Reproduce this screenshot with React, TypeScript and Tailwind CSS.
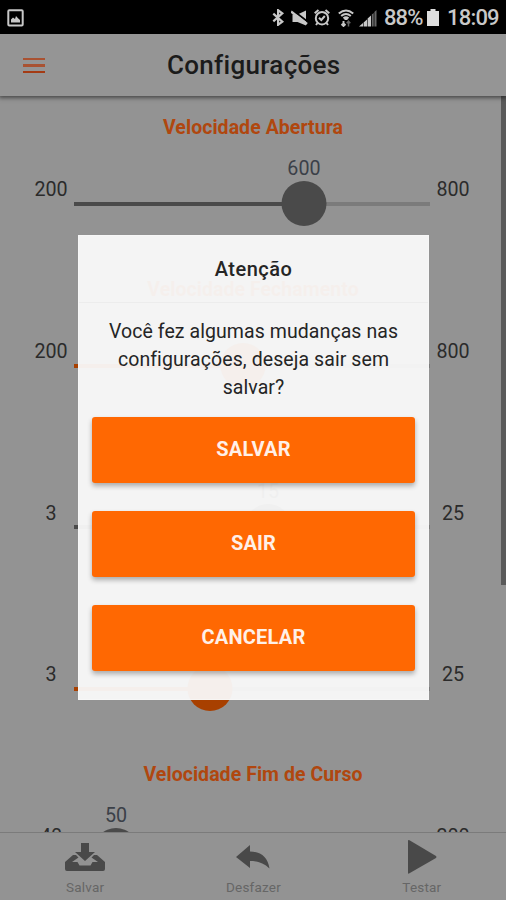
import clsx from 'clsx';

interface RangeSetting {
  id: string;
  title?: string;
  min: string;
  max: string;
  pin?: string;
  percent: number;
  active?: boolean;
}

const settings: RangeSetting[] = [
  { id: 'open', title: 'Velocidade Abertura', min: '200', max: '800', pin: '600', percent: 64.6 },
  { id: 'close', title: 'Velocidade Fechamento', min: '200', max: '800', percent: 47.4, active: true },
  { id: 'ramp-open', min: '3', max: '25', pin: '15', percent: 54.5 },
  { id: 'ramp-close', min: '3', max: '25', percent: 38.2, active: true },
  { id: 'end', title: 'Velocidade Fim de Curso', min: '40', max: '200', pin: '50', percent: 11.8 },
];

function StatusBar() {
  return (
    <div className="flex h-[34px] shrink-0 items-center bg-black px-[7px] pt-px text-[#c8c8c8]">
      <svg className="h-[18px] w-[17px]" viewBox="0 0 17 18">
        <rect x="1.3" y="1.3" width="14.4" height="15.2" rx="1" fill="none" stroke="currentColor" strokeWidth="2" />
        <path d="M4 13.5v-3l2-2 2 1.5 1-3 1.8 2 2.2 2v2.5z" fill="currentColor" />
      </svg>
      <div className="ml-auto flex items-center">
        <svg className="h-[17px] w-[13px]" viewBox="0 0 13 17" fill="none" stroke="currentColor" strokeWidth="2.2">
          <path d="M1.3 4.6l9 8.1-4.2 3.1V1.2l4.2 3.1-9 8.1" />
        </svg>
        <svg className="ml-[6px] h-[16px] w-[17px]" viewBox="0 0 17 16">
          <path d="M1.5 4.5h5L15 .5v15L6.5 12h-5z" fill="currentColor" />
          <path d="M1.5 0L17 12" stroke="#000" strokeWidth="1.8" />
          <path d="M0 1.5l16 12.5" stroke="currentColor" strokeWidth="2.4" />
        </svg>
        <svg className="ml-[6px] h-[17px] w-[16px]" viewBox="0 0 16 17" fill="none" stroke="currentColor" strokeWidth="2">
          <circle cx="8" cy="9.2" r="6.2" />
          <path d="M.7 4.2L4.5 1M15.3 4.2L11.5 1M5 8.8l2.3 2.2 3.5-4M3.5 14l-1.5 2M12.5 14l1.5 2" />
        </svg>
        <svg className="ml-[8px] h-[18px] w-[16px]" viewBox="0 0 16 18" fill="none" stroke="currentColor" strokeWidth="2.1">
          <path d="M.8 4.5Q8-1.5 15.2 4.5M3.2 7Q8 3 12.8 7M5.5 9.3Q8 7.5 10.5 9.3" />
          <path d="M8 8.5v2.5" strokeWidth="3" />
          <path d="M5.5 12v5M3.5 15l2 2 2-2" strokeWidth="1.9" />
          <path d="M10.5 17.5v-5M8.7 14.2l1.8-2 1.8 2" stroke="#666" strokeWidth="1.5" />
        </svg>
        <svg className="ml-[5px] h-[18px] w-[18px]" viewBox="0 0 18 18">
          <path d="M0 17.5l4-3.5v3.5zM4.6 13.5l3.4-3v7H4.6zM8.6 9.5l3.4-3v11H8.6z" fill="currentColor" />
          <path d="M12.8 5.5l1.9-1.5v13.5h-1.9zM15.4 3l2.1-2v16.5h-2.1z" fill="#666" />
        </svg>
        <span className="ml-[7px] w-[39px] text-[22px] leading-[24px] font-medium tracking-[-0.9px]">88%</span>
        <svg className="ml-[4px] h-[17px] w-[12px]" viewBox="0 0 12 17">
          <path d="M3.5 0h5v2H12v15H0V2h3.5z" fill="#dedede" />
        </svg>
        <span className="ml-[8px] w-[52px] text-[22px] leading-[24px] font-medium tracking-[-0.8px]">18:09</span>
      </div>
    </div>
  );
}

function Header() {
  return (
    <header className="relative z-10 flex h-[62px] shrink-0 items-center bg-[#959595] pl-[23px] shadow-[0_1px_4px_1px_rgba(0,0,0,0.5)]">
      <button type="button" aria-label="Menu" className="flex w-[22px] flex-col gap-[4px] pt-px">
        <span className="h-[2.5px] bg-[#a95232]" />
        <span className="h-[2.5px] bg-[#a95232]" />
        <span className="h-[2.5px] bg-[#a43b14]" />
      </button>
      <h1 className="ml-[122px] text-[26px] font-medium tracking-[0.3px] text-[#1b1b1b]">Configurações</h1>
    </header>
  );
}

function RangeItem({ title, min, max, pin, percent, active }: Omit<RangeSetting, 'id'>) {
  const fill = active ? 'bg-[#a84000]' : 'bg-[#4a4a4a]';

  return (
    <section className="flex h-[161.7px] shrink-0 flex-col">
      <h2 className="mt-[20px] h-[24px] text-center text-[19.5px] leading-[24px] font-bold tracking-[0.05px] text-[#b0470f]">
        {title}
      </h2>
      <div className="mt-[38.4px] flex px-[28px] text-[19.7px] leading-[24px] text-[#2b2b2b]">
        <span className="w-[46px] text-center">{min}</span>
        <div className="relative mt-[23.6px] h-[4px] w-[356px] bg-[#7b7b7b]">
          <div className={clsx('h-[4px]', fill)} style={{ width: `${percent}%` }} />
          <div
            className={clsx('absolute top-[-21px] size-[45px] -translate-x-1/2 rounded-full', fill)}
            style={{ left: `${percent}%` }}
          />
          {pin && (
            <span
              className="absolute top-[-45px] -translate-x-1/2 text-[#3b4048]"
              style={{ left: `${percent}%` }}
            >
              {pin}
            </span>
          )}
        </div>
        <span className="w-[46px] text-center">{max}</span>
      </div>
    </section>
  );
}

function Footer() {
  return (
    <footer className="grid h-[68px] shrink-0 grid-cols-3 border-t border-[#7b7b7b] bg-[#939393] pl-px text-[13.5px] tracking-[0.2px] text-[#666]">
      <button type="button" className="flex flex-col items-center pt-[9px]">
        <svg className="h-[32px] w-[40px]" viewBox="0 0 40 32" fill="#494949">
          <path d="M16 1h8v9h6L20 19 10 10h6z" />
          <path d="M8 13h3l2.5 2.5L7 20h5.5l2 3.5h11l2-3.5H33l-6.5-4.5L29 13h3l8 7v7q0 2-2 2H2q-2 0-2-2v-7z" />
        </svg>
        <span className="mt-[3px] leading-[20px]">Salvar</span>
      </button>
      <button type="button" className="flex flex-col items-center pt-[9px]">
        <svg className="h-[32px] w-[34px]" viewBox="0 0 34 32" fill="#494949">
          <path d="M0 15L14 3v6.5c11 0 18 6 19.5 17C28 21 22 19 14 19v7z" />
        </svg>
        <span className="mt-[3px] leading-[20px]">Desfazer</span>
      </button>
      <button type="button" className="flex flex-col items-center pt-[6px]">
        <svg className="h-[36px] w-[30px]" viewBox="0 0 30 36" fill="#494949">
          <path d="M1.5 1q-.5 0-.5 1v32q0 1 1 .6L29 19q1-1 0-2L2.5 1.3z" />
        </svg>
        <span className="mt-[2px] leading-[20px]">Testar</span>
      </button>
    </footer>
  );
}

function AlertDialog() {
  return (
    <div
      role="alertdialog"
      className="absolute top-[235px] left-[78px] z-20 flex h-[465px] w-[351px] flex-col border border-[#f8f8f8]/60 bg-[#f9f9f9]/95 text-[#252525]"
    >
      <h2 className="h-[67px] border-b border-black/[0.03] pt-[20px] text-center text-[20px] leading-[26px] font-medium tracking-[0.5px]">
        Atenção
      </h2>
      <p className="pt-[15px] text-center text-[19.5px] leading-[28px] tracking-[0.08px]">
        Você fez algumas mudanças nas
        <br />
        configurações, deseja sair sem
        <br />
        salvar?
      </p>
      <div className="mt-[15px] flex flex-col gap-[28px] px-[13px]">
        {['Salvar', 'Sair', 'Cancelar'].map((label) => (
          <button
            key={label}
            type="button"
            className="h-[66px] rounded-[3px] bg-[#ff6802] pb-[2px] text-[20px] font-bold tracking-[0.2px] text-[#fff0e8] uppercase shadow-[0_3px_5px_rgba(0,0,0,0.3)]"
          >
            {label}
          </button>
        ))}
      </div>
    </div>
  );
}

export default function App() {
  return (
    <div className="relative flex h-[900px] w-[506px] flex-col overflow-hidden bg-[#939393] font-['Roboto',sans-serif]">
      <StatusBar />
      <Header />
      <main className="relative flex min-h-0 flex-1 flex-col overflow-hidden">
        {settings.map(({ id, ...range }) => (
          <RangeItem key={id} {...range} />
        ))}
        <div className="absolute top-0 right-0 h-[489px] w-[5px] bg-[#5a5a5a]" />
      </main>
      <Footer />
      <AlertDialog />
    </div>
  );
}
